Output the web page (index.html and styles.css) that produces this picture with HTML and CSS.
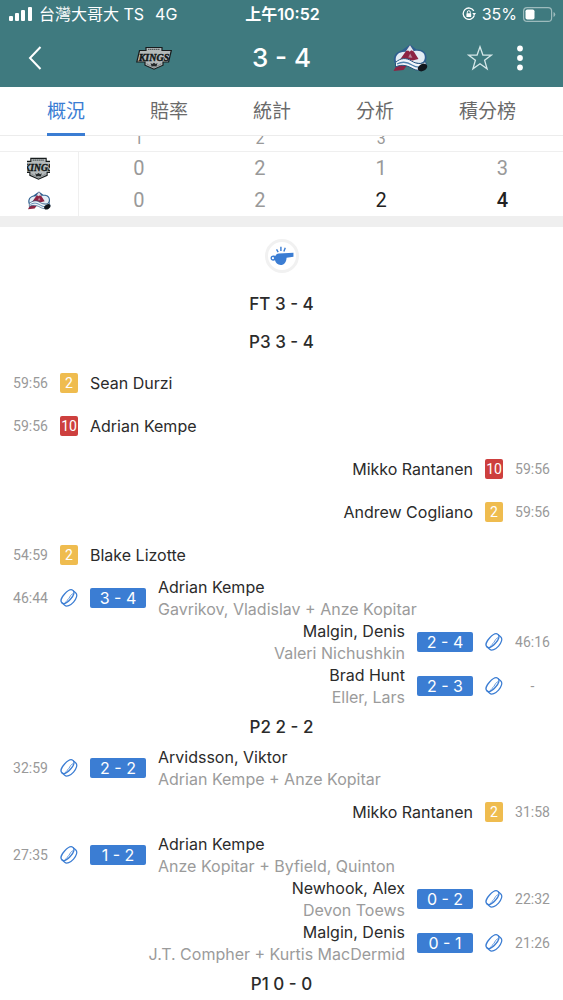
FILE: index.html
```html
<!DOCTYPE html>
<html lang="zh-Hant">
<head>
    <meta charset="UTF-8">
    <meta name="viewport" content="width=device-width, initial-scale=1">
    <title>3 - 4</title>
    <link rel="stylesheet" href="styles.css">
</head>
<body>
    <!-- Shared icons -->
    <svg class="sprite" aria-hidden="true">
        <symbol id="kings" viewBox="0 0 36 24">
            <path d="M10 1.500h16v3h9.300l-2.700 11.500h-5.600v3.200L18 23.200 9 19.200V16H.8L3.500 4.500H10z" fill="#b4b9ba" stroke="#171c1d" stroke-width="1.200"/>
            <path d="M12 3.300h12" stroke="#525a5b" stroke-width="1.200" stroke-dasharray="1.500 .5"/>
            <path d="M11 17.300v.900l7 3.200 7-3.200v-.900" fill="none" stroke="#6d7475" stroke-width=".7"/>
            <path d="M14.500 17l1.700 1 1.800-1.200 1.800 1.200 1.700-1-1 3.200h-5z" fill="#24292a"/>
            <text x="18" y="14.600" class="kings-word">KINGS</text>
        </symbol>
        <symbol id="avs" viewBox="0 0 36 28">
            <path d="M2.500 19C.5 13 3.500 8 9.500 6.500L18 .5l6.500 5c6.500-.5 10 3 10 8 0 3-1 5-2.500 6.500L24 23z" fill="#2f6090"/>
            <path d="M4 17.500C2.800 12.500 5.500 8.700 10.500 8l12-1c7-1 10.800 2 10.300 7-.4 3-2 4.500-4 5z" fill="#e4edf5"/>
            <path d="M7 17L18 1.500 26.500 15l-6 1.500-7-1.500z" fill="#8d2443"/>
            <path d="M14 7L18 1.200l4 6.300-2.800-1.300-1.500 1.600-1.500-1.400z" fill="#dfe6ee"/>
            <path d="M16.300 13.500l1.800-4 2.300 4.200z" fill="#b9859a"/>
            <path d="M1.500 27l3.500-6.500 9.500 1.500-3 4z" fill="#8d2443"/>
            <path d="M3.500 18.500c5-4.800 11-5 16-1.500 5 3 9.500 3.500 14 .5l1 4c-2.500 4.500-8 6-13 3.500-5.500-3-11-5.500-18-2z" fill="#f2f6fa" stroke="#27547f" stroke-width="1"/>
            <path d="M5 20c6-3.300 10.500-2 15 1 3.500 2.200 7 2.800 11 1.400" fill="none" stroke="#4f82ae" stroke-width="1.400"/>
            <ellipse cx="30.500" cy="23.500" rx="5" ry="3.500" transform="rotate(-28 30.500 23.500)" fill="#10161d"/>
        </symbol>
        <symbol id="puck" viewBox="0 0 20 20">
            <g fill="none" stroke="currentColor" stroke-width="1.400" stroke-linejoin="round" transform="rotate(-48 10 10)">
                <path d="M.8 7.600C.8 4.900 5 3.400 10 3.400s9.200 1.500 9.200 4.200v4.300c0 2.900-4.200 4.900-9.200 4.900S.8 14.800.8 11.900z"/>
                <path d="M.8 7.600c0 2.800 4.200 4.500 9.200 4.500s9.200-1.700 9.200-4.500"/>
                <path d="M3.500 10.800c2-1.200 4-.2 6.300-.6s4.200-1.400 6.800-.1" stroke-width=".8"/>
            </g>
        </symbol>
    </svg>

    <div class="app">
        <header class="header">
            <div class="status">
                <div class="status-left">
                    <svg class="signal" viewBox="0 0 24 14" fill="#fff">
                        <rect x="0" y="9" width="4" height="5" rx="1"/>
                        <rect x="6" y="6" width="4" height="8" rx="1"/>
                        <rect x="12" y="3" width="4" height="11" rx="1"/>
                        <rect x="19" y="0" width="4" height="14" rx="1"/>
                    </svg>
                    <span>台灣大哥大 TS</span>
                    <span class="network">4G</span>
                </div>
                <div class="clock">上午10:52</div>
                <div class="status-right">
                    <svg class="lock" viewBox="0 0 14 14">
                        <path d="M12.300 8.500A5.700 5.700 0 1 1 11.800 3.800" fill="none" stroke="#fff" stroke-width="1.300"/>
                        <path d="M10.300 6h3.700l-1.800 2.800z" fill="#fff"/>
                        <rect x="4.400" y="6.300" width="4.800" height="3.700" rx=".6" fill="#fff"/>
                        <path d="M5.300 6.500V5.200a1.500 1.500 0 0 1 3 0v1.300" fill="none" stroke="#fff"/>
                    </svg>
                    <span>35%</span>
                    <svg class="battery" viewBox="0 0 33 15">
                        <rect x=".6" y=".6" width="28" height="13.800" rx="3.500" fill="none" stroke="#9dbbbd" stroke-width="1.200"/>
                        <rect x="2.500" y="2.500" width="9" height="10" rx="1.800" fill="#fff"/>
                        <path d="M30.500 5v5q1.800-.8 1.800-2.500T30.500 5z" fill="#9dbbbd"/>
                    </svg>
                </div>
            </div>
            <div class="nav">
                <button class="icon-btn back" aria-label="返回">
                    <svg width="14" height="24" viewBox="0 0 14 24"><path d="M12.500 1L2 12l10.500 11" fill="none" stroke="#fff" stroke-width="2"/></svg>
                </button>
                <svg class="nav-kings"><use href="#kings"/></svg>
                <h1 class="score">3 - 4</h1>
                <svg class="nav-avs"><use href="#avs"/></svg>
                <div class="nav-actions">
                    <button class="icon-btn" aria-label="收藏">
                        <svg width="26" height="26" viewBox="0 0 26 26"><path d="M13 1.800l2.900 8.200 8.600.1-6.900 5.200 2.500 8.500-7.100-5-7.100 5 2.500-8.500L1.500 10.100l8.600-.1z" fill="none" stroke="#d5e8e9" stroke-width="1.300"/></svg>
                    </button>
                    <button class="icon-btn" aria-label="更多">
                        <svg width="6" height="26" viewBox="0 0 6 26" fill="#fff"><circle cx="3" cy="3.500" r="2.900"/><circle cx="3" cy="13" r="2.900"/><circle cx="3" cy="22.500" r="2.900"/></svg>
                    </button>
                </div>
            </div>
        </header>

        <nav class="tabs">
            <a href="#" class="tab active">概況</a>
            <a href="#" class="tab">賠率</a>
            <a href="#" class="tab">統計</a>
            <a href="#" class="tab">分析</a>
            <a href="#" class="tab">積分榜</a>
        </nav>

        <main class="content">
            <table class="periods">
                <thead>
                    <tr><th class="team"></th><th>1</th><th>2</th><th>3</th><th></th></tr>
                </thead>
                <tbody>
                    <tr>
                        <td class="team"><svg class="team-kings" viewBox="6 0 24 24"><use href="#kings" width="36" height="24"/></svg></td>
                        <td>0</td><td>2</td><td>1</td><td>3</td>
                    </tr>
                    <tr>
                        <td class="team"><svg class="team-avs"><use href="#avs"/></svg></td>
                        <td>0</td><td>2</td><td class="won">2</td><td class="won total">4</td>
                    </tr>
                </tbody>
            </table>

            <section class="timeline">
                <div class="whistle">
                    <svg width="24" height="20" viewBox="0 0 22 18">
                        <path d="M8 6.800L21.500 6v3.800l-6.300.7c-.2 4-2.200 6.700-5.400 6.700-2.800 0-4.800-1.700-5.200-4.200-2.300.8-4.100-.2-4.100-2 0-2 2-3 4.300-1.900.6-1.300 1.700-2 3.200-2.300z" fill="#3b7dd3"/>
                        <circle cx="2.700" cy="11" r="1" fill="#fff"/>
                        <path d="M6 3l1.500 2.500M10 .5v4M14 1.500l-1.300 3.300" stroke="#3b7dd3" stroke-width="1.300"/>
                    </svg>
                </div>
                <h2 class="period">FT 3 - 4</h2>
                <h2 class="period">P3 3 - 4</h2>

                <div class="event">
                    <span class="time">59:56</span>
                    <span class="card">2</span>
                    <span class="name">Sean Durzi</span>
                </div>
                <div class="event">
                    <span class="time">59:56</span>
                    <span class="card red">10</span>
                    <span class="name">Adrian Kempe</span>
                </div>
                <div class="event away">
                    <span class="time">59:56</span>
                    <span class="card red">10</span>
                    <span class="name">Mikko Rantanen</span>
                </div>
                <div class="event away">
                    <span class="time">59:56</span>
                    <span class="card">2</span>
                    <span class="name">Andrew Cogliano</span>
                </div>
                <div class="event">
                    <span class="time">54:59</span>
                    <span class="card">2</span>
                    <span class="name">Blake Lizotte</span>
                </div>
                <div class="event">
                    <span class="time">46:44</span>
                    <svg class="puck"><use href="#puck"/></svg>
                    <span class="result">3 - 4</span>
                    <div class="name">Adrian Kempe<small>Gavrikov, Vladislav + Anze Kopitar</small></div>
                </div>
                <div class="event away">
                    <span class="time">46:16</span>
                    <svg class="puck"><use href="#puck"/></svg>
                    <span class="result">2 - 4</span>
                    <div class="name">Malgin, Denis<small>Valeri Nichushkin</small></div>
                </div>
                <div class="event away">
                    <span class="time">-</span>
                    <svg class="puck"><use href="#puck"/></svg>
                    <span class="result">2 - 3</span>
                    <div class="name">Brad Hunt<small>Eller, Lars</small></div>
                </div>

                <h2 class="period">P2 2 - 2</h2>

                <div class="event">
                    <span class="time">32:59</span>
                    <svg class="puck"><use href="#puck"/></svg>
                    <span class="result">2 - 2</span>
                    <div class="name">Arvidsson, Viktor<small>Adrian Kempe + Anze Kopitar</small></div>
                </div>
                <div class="event away">
                    <span class="time">31:58</span>
                    <span class="card">2</span>
                    <span class="name">Mikko Rantanen</span>
                </div>
                <div class="event">
                    <span class="time">27:35</span>
                    <svg class="puck"><use href="#puck"/></svg>
                    <span class="result">1 - 2</span>
                    <div class="name">Adrian Kempe<small>Anze Kopitar + Byfield, Quinton</small></div>
                </div>
                <div class="event away">
                    <span class="time">22:32</span>
                    <svg class="puck"><use href="#puck"/></svg>
                    <span class="result">0 - 2</span>
                    <div class="name">Newhook, Alex<small>Devon Toews</small></div>
                </div>
                <div class="event away">
                    <span class="time">21:26</span>
                    <svg class="puck"><use href="#puck"/></svg>
                    <span class="result">0 - 1</span>
                    <div class="name">Malgin, Denis<small>J.T. Compher + Kurtis MacDermid</small></div>
                </div>

                <h2 class="period">P1 0 - 0</h2>
            </section>
        </main>
    </div>
</body>
</html>
```
FILE: styles.css
```css
* {
    box-sizing: border-box;
}

body {
    margin: 0;
    font-family: Inter, "Noto Sans CJK TC", sans-serif;
    font-size: 16px;
    color: #2b2b2b;
    background: #fff;
}

svg {
    display: block;
    flex: none;
}

.sprite {
    position: absolute;
    width: 0;
    height: 0;
}

.kings-word {
    font: italic bold 10px "Liberation Serif", serif;
    text-anchor: middle;
    fill: #111617;
    stroke: #111617;
    stroke-width: 0.4px;
}

.app {
    display: flex;
    flex-direction: column;
    height: 100vh;
}

/* Header */
.header {
    flex: none;
    background: #3f7a7f;
    color: #fff;
}

.status {
    display: grid;
    grid-template-columns: 1fr auto 1fr;
    align-items: center;
    height: 28px;
    padding: 0 7px 0 9px;
    line-height: 28px;
}

.status-left,
.status-right {
    display: flex;
    align-items: center;
    gap: 6px;
}

.status-right {
    justify-content: flex-end;
}

.network {
    margin-left: 5px;
}

.signal {
    width: 24px;
    height: 14px;
}

.clock {
    font-weight: 600;
}

.lock {
    width: 14px;
    height: 14px;
}

.battery {
    width: 33px;
    height: 15px;
}

.nav {
    display: grid;
    grid-template-columns: minmax(0, 1fr) 128px 128px 128px minmax(0, 1fr);
    align-items: center;
    justify-items: center;
    height: 59px;
}

.icon-btn {
    padding: 0;
    border: 0;
    background: none;
    cursor: pointer;
}

.back {
    justify-self: start;
    margin-left: 28px;
}

.nav-kings {
    width: 36px;
    height: 24px;
}

.nav-avs {
    width: 36px;
    height: 28px;
}

.score {
    margin: 0;
    font-size: 26px;
    font-weight: 500;
}

.nav-actions {
    display: flex;
    gap: 24px;
    justify-self: end;
    margin-right: 40px;
}

/* Tabs */
.tabs {
    display: flex;
    flex: none;
    justify-content: space-between;
    height: 49px;
    padding: 0 47px;
    border-bottom: 1px solid #ececec;
}

.tab {
    height: 49px;
    border-bottom: 3px solid transparent;
    font-size: 19px;
    line-height: 50px;
    color: #6a6a6a;
    text-decoration: none;
}

.tab.active {
    border-color: #3b7dd3;
    color: #3b7dd3;
}

.content {
    flex: 1;
    min-height: 0;
    overflow: hidden;
}

/* Score by period, scrolled partly under the tabs */
.periods {
    width: 100%;
    margin-top: -9px;
    table-layout: fixed;
    border-collapse: collapse;
    border-bottom: 11px solid #efefef;
    font-family: Roboto, sans-serif;
    text-align: center;
    color: #999;
}

.periods th {
    height: 24px;
    padding: 0;
    border-bottom: 1px solid #efefef;
    font-size: 16px;
    font-weight: 400;
    line-height: 24px;
}

.periods td {
    height: 32px;
    padding: 0;
    font-size: 20px;
    line-height: 32px;
}

.periods .team {
    width: 78px;
}

.periods td.team {
    border-right: 1px solid #efefef;
}

.periods .won {
    color: #222;
}

.periods .total {
    font-weight: 500;
}

.team-kings {
    width: 23px;
    height: 23px;
    margin: 0 auto;
}

.team-avs {
    width: 24px;
    height: 19px;
    margin: 0 auto;
}

/* Timeline */
.timeline {
    padding-top: 12px;
}

.whistle {
    display: flex;
    align-items: center;
    justify-content: center;
    width: 34px;
    height: 34px;
    margin: 0 auto 12px;
    border: 3px solid #f1f1f1;
    border-radius: 50%;
}

.period {
    margin: 0;
    font-size: 17px;
    font-weight: 500;
    line-height: 38px;
    text-align: center;
}

.event {
    display: flex;
    align-items: center;
    gap: 12px;
    min-height: 43px;
    padding: 0 13px;
}

.away {
    flex-direction: row-reverse;
    text-align: right;
}

.time {
    width: 35px;
    font-family: Roboto, sans-serif;
    font-size: 14px;
    text-align: center;
    color: #999;
}

.card {
    width: 18px;
    border-radius: 2px;
    background: #efbc4f;
    font-family: Roboto, sans-serif;
    font-size: 14px;
    line-height: 20px;
    text-align: center;
    color: #fff;
}

.card.red {
    background: #cd3f3e;
}

.puck {
    width: 18px;
    height: 20px;
    color: #3b7dd3;
}

.result {
    width: 56px;
    border-radius: 2px;
    background: #3b7dd3;
    line-height: 20px;
    text-align: center;
    color: #fff;
}

.name {
    line-height: 22px;
}

.name small {
    display: block;
    font-size: 16px;
    color: #9b9b9b;
}
```
